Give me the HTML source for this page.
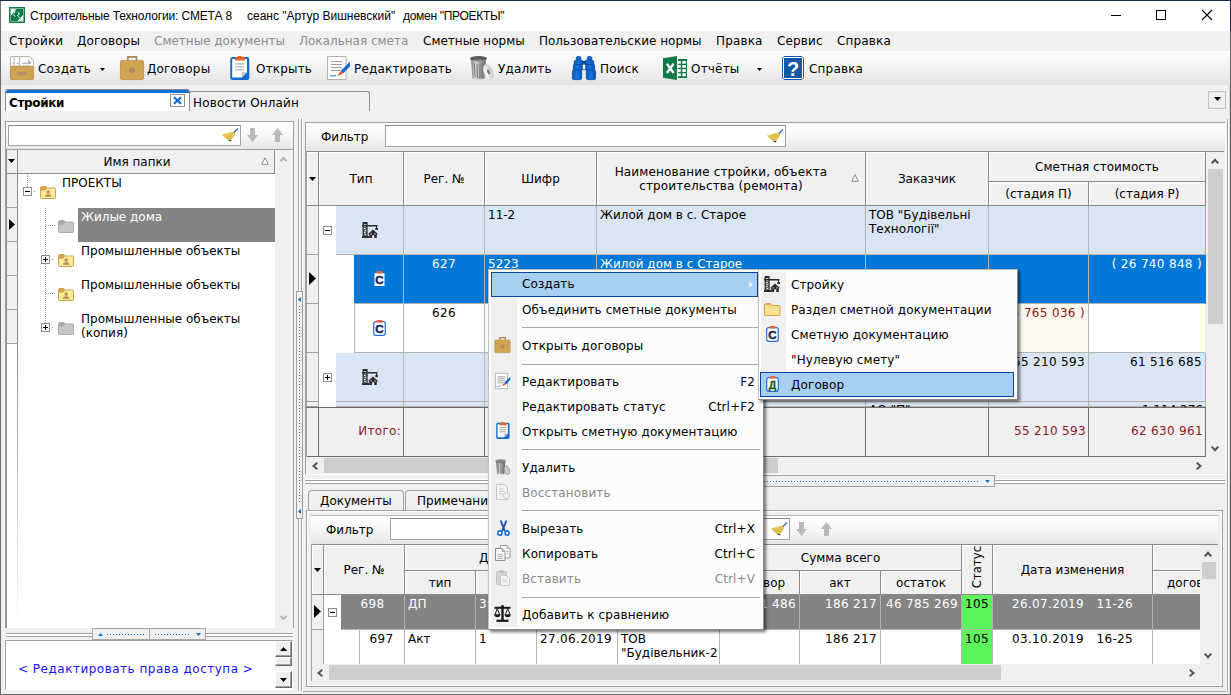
<!DOCTYPE html>
<html><head><meta charset="utf-8"><title>СМЕТА 8</title>
<style>
*{box-sizing:border-box;margin:0;padding:0}
html,body{width:1231px;height:695px;overflow:hidden}
body{position:relative;background:#f0f0f0;font-family:"DejaVu Sans","Liberation Sans",sans-serif;font-size:12px;color:#000;line-height:14px}
.a{position:absolute}
.t{position:absolute;white-space:nowrap}
.seg{font-family:"Liberation Sans",sans-serif}
.hl{position:absolute;height:1px;background:#a0a0a0}
.vl{position:absolute;width:1px;background:#a0a0a0}
svg{position:absolute;overflow:visible}
.hd{position:absolute;background:#f0f0f0;border-right:1px solid #8a8a8a;border-bottom:1px solid #8a8a8a;display:flex;align-items:center;justify-content:center;text-align:center;line-height:14px;box-shadow:inset 1px 1px 0 #fff}
.c{position:absolute;border-right:1px solid #b4b4b4;border-bottom:1px solid #b4b4b4;padding:2px 3px 0 3px;line-height:14px;overflow:hidden}
.r{text-align:right}
.ce{text-align:center}
.n{letter-spacing:.33px}
.mi{position:absolute;white-space:nowrap;line-height:14px;letter-spacing:.12px}
.sep{position:absolute;height:1px;background:#a0a0a0}
</style></head><body>
<!-- TITLEBAR -->
<div class="a" id="titlebar" style="left:0;top:0;width:1231px;height:31px;background:#fff"></div>
<div class="a" style="left:0;top:0;width:1231px;height:1px;background:#1b2a4a"></div>
<div class="a" style="left:1230px;top:0;width:1px;height:31px;background:#1b2a4a"></div>
<div class="a" style="left:0;top:1px;width:1px;height:694px;background:#6d6d6d"></div>
<div class="a" style="left:1230px;top:31px;width:1px;height:664px;background:#5f5f5f"></div><div class="a" style="left:1229px;top:31px;width:1px;height:663px;background:#d9d9d9"></div>
<!--ICONS_TITLE-->
<div class="t seg" style="left:30px;top:9px;font-size:12px;letter-spacing:-0.13px">Строительные Технологии: СМЕТА 8</div>
<div class="t seg" style="left:247px;top:9px;font-size:12px;">сеанс "Артур Вишневский"</div>
<div class="t seg" style="left:403px;top:9px;font-size:12px;letter-spacing:-0.3px">домен "ПРОЕКТЫ"</div>
<!-- MENUBAR -->
<div class="a" style="left:1px;top:31px;width:1229px;height:20px;background:#f0f0f0"></div>
<div class="t" style="left:9px;top:34px;letter-spacing:.15px">Стройки</div>
<div class="t" style="left:77px;top:34px;letter-spacing:.15px">Договоры</div>
<div class="t" style="left:154px;top:34px;color:#8c8c8c">Сметные документы</div>
<div class="t" style="left:299px;top:34px;color:#8c8c8c">Локальная смета</div>
<div class="t" style="left:423px;top:34px">Сметные нормы</div>
<div class="t" style="left:539px;top:34px">Пользовательские нормы</div>
<div class="t" style="left:716px;top:34px;letter-spacing:.15px">Правка</div>
<div class="t" style="left:777px;top:34px;letter-spacing:.15px">Сервис</div>
<div class="t" style="left:837px;top:34px;letter-spacing:.15px">Справка</div>
<!-- TOOLBAR -->
<div class="a" style="left:1px;top:51px;width:1229px;height:34px;background:linear-gradient(#fdfdfd,#f4f4f4 45%,#e3e3e3)"></div>
<div class="t" style="left:38px;top:62px;letter-spacing:.18px">Создать</div>
<div class="t" style="left:147px;top:62px;letter-spacing:.18px">Договоры</div>
<div class="t" style="left:256px;top:62px;letter-spacing:.18px">Открыть</div>
<div class="t" style="left:354px;top:62px;letter-spacing:.18px">Редактировать</div>
<div class="t" style="left:498px;top:62px;letter-spacing:.18px">Удалить</div>
<div class="t" style="left:600px;top:62px;letter-spacing:.18px">Поиск</div>
<div class="t" style="left:691px;top:62px;letter-spacing:.18px">Отчёты</div>
<div class="t" style="left:809px;top:62px;letter-spacing:.18px">Справка</div>
<svg style="left:9px;top:7px" width="16" height="16" viewBox="0 0 16 16"><rect x="0" y="0" width="16" height="16" fill="#0b7a43"/><rect x="1.500" y="1.500" width="13" height="13" fill="none" stroke="#fff" stroke-opacity=".55" stroke-width=".8"/><path d="M2 2h5.500L2 8.500z" fill="#fff"/><path d="M14 14H8.500L14 8z" fill="#fff"/><path d="M4.800 6.200l1.200-1M4.500 8l1.500 1.200M9 5.500l1.500 1.200M8.500 8.500l1.500-1.200M9.500 9.500l.8 1" stroke="#fff" stroke-width="1" stroke-linecap="round" fill="none"/></svg>
<!-- window buttons -->
<div class="a" style="left:1111px;top:15px;width:10px;height:1px;background:#000"></div>
<div class="a" style="left:1156px;top:10px;width:10px;height:10px;border:1px solid #000"></div>
<svg style="left:1202px;top:10px" width="10" height="10" viewBox="0 0 10 10"><path d="M0 0L10 10M10 0L0 10" stroke="#000" stroke-width="1.1"/></svg>
<!-- Создать -->
<svg style="left:10px;top:56px" width="24" height="24" viewBox="0 0 24 24">
<path d="M.5 11V2Q.5 .5 2 .5H19.500L23.500 4.500V11z" fill="#fff" stroke="#b3a99b" stroke-width=".9"/><path d="M4.200 .5V11M9.600 .5V11" stroke="#b3a99b" stroke-width=".9"/>
<path d="M18 3.600V7.300H21.600z" fill="#a9a9a9"/>
<path d="M2.700 7.200h1.200M6.500 7.200h2.200M12 7.200h8.600" stroke="#a6a6a6" stroke-width="1"/><path d="M2.700 9.600h1.200M6.500 9.600h2.200M12 9.600h8.600" stroke="#c3cad6" stroke-width=".8"/>
<rect x=".4" y="10.400" width="23.200" height="13.200" rx="1.600" fill="#d0a352" stroke="#b98948" stroke-width=".8"/><rect x="7" y="16" width="9.600" height="2.800" fill="#b08e66"/></svg>
<svg style="left:100px;top:68px" width="5" height="3" viewBox="0 0 5 3"><path d="M0 0h5L2.500 3z" fill="#000"/></svg>
<!-- Договоры -->
<svg style="left:120px;top:56px" width="24" height="24" viewBox="0 0 24 24">
<path d="M7.900 4.500V.9h8.500V4.500" fill="none" stroke="#a8854f" stroke-width="1.700"/><rect x=".4" y="4.400" width="23.200" height="19.200" rx="1.600" fill="#d1a552" stroke="#b38c4e" stroke-width=".8"/><path d="M.8 6.500Q5 14 12 15.500Q19 14 23.200 6.500" fill="none" stroke="#b9935a" stroke-width="1" stroke-dasharray="1.500 .8"/><circle cx="12" cy="14.300" r="3" fill="#b08e66"/></svg>
<!-- Открыть -->
<svg style="left:230px;top:56px" width="20" height="24" viewBox="0 0 20 24"><rect x=".3" y="1" width="19" height="23" rx="2.200" fill="#0f6bd2"/><path d="M2.200 3h14.800v13.300l-5.200 5.200H2.200z" fill="#fff"/><path d="M17 16.300h-5.200v5.200z" fill="#bdbdbd"/><path d="M5 4.600V2.200Q5 1.300 6 1.300H7.200L8 0h3.800l.8 1.300H14Q15 1.300 15 2.200V4.600z" fill="#e8622c"/><path d="M5 7.900h9M5 10.900h9M5 13.900h9" stroke="#959595" stroke-width=".95"/></svg>
<!-- Редактировать -->
<svg style="left:327px;top:56px" width="24" height="24" viewBox="0 0 24 24"><rect x=".5" y=".5" width="18.500" height="23" fill="#fff" stroke="#b6b2ae" stroke-width="1"/><path d="M4 5.600h11M4 8.600h11M4 11.600h11M4 14.600h9" stroke="#8f8f8f" stroke-width=".95"/><path d="M3 20.500l1-1.200 1 1.200 1-1.200 1 1.200 1-1.200 1 .6" fill="none" stroke="#1a6fd8" stroke-width="1"/><path d="M22.800 5.800l.2 4.500-6.700 6.900-2.500-2.400z" fill="#0f6bd2"/><path d="M13.800 14.800l2.500 2.400L10.200 20.200z" fill="#e8541e"/></svg>
<!-- Удалить -->
<svg style="left:470px;top:56px" width="24" height="24" viewBox="0 0 24 24">
<defs><linearGradient id="tg" x1="0" x2="1"><stop offset="0" stop-color="#7a7a7a"/><stop offset=".3" stop-color="#dedede"/><stop offset=".65" stop-color="#a2a2a2"/><stop offset="1" stop-color="#666"/></linearGradient>
<linearGradient id="tl" x1="0" x2="1"><stop offset="0" stop-color="#fff"/><stop offset="1" stop-color="#c4c4c4"/></linearGradient></defs>
<path d="M1 3h15l-1.400 19.500q-6 2-12.200 0z" fill="url(#tg)"/>
<path d="M4.300 7l.9 14M7 7.500l.4 14.500M10 7.500l-.2 14.500M12.800 7l-.8 14" stroke="#6a6a6a" stroke-width="1.100" opacity=".8"/>
<ellipse cx="8.500" cy="2.400" rx="8.500" ry="2.300" fill="#5a5a5a"/><ellipse cx="8.500" cy="4.600" rx="7.300" ry="1.300" fill="#8e8e8e" opacity=".7"/>
<ellipse cx="18.300" cy="16" rx="4.300" ry="8" transform="rotate(-22 18.300 16)" fill="url(#tl)" stroke="#d0d0d0" stroke-width=".6"/>
<ellipse cx="18.600" cy="16" rx="1.300" ry="2.600" transform="rotate(-22 18.600 16)" fill="#7c7c7c"/></svg>
<!-- Поиск -->
<svg style="left:572px;top:56px" width="24" height="24" viewBox="0 0 24 24">
<defs><linearGradient id="bg1" x1="0" x2="1"><stop offset="0" stop-color="#0a57bb"/><stop offset=".45" stop-color="#1873de"/><stop offset="1" stop-color="#0a52b0"/></linearGradient></defs>
<g fill="url(#bg1)" stroke="#084a9c" stroke-width=".8">
<rect x="4.300" y=".4" width="4.600" height="5" rx="1.600"/><rect x="15.200" y=".4" width="4.600" height="5" rx="1.600"/>
<rect x="2.300" y="4.500" width="8.700" height="4.300" rx="1"/><rect x="13" y="4.500" width="8.700" height="4.300" rx="1"/>
<rect x="1.300" y="8.500" width="8.900" height="5.700" rx=".8"/><rect x="13.800" y="8.500" width="8.900" height="5.700" rx=".8"/>
<rect x=".4" y="14" width="9.300" height="9.600" rx="1.600"/><rect x="14.300" y="14" width="9.300" height="9.600" rx="1.600"/>
</g>
<rect x="10.500" y="5" width="3" height="3.500" fill="#084a9c"/><rect x="10" y="13.300" width="4" height=".9" fill="#0a57bb"/></svg>
<!-- Отчёты -->
<svg style="left:663px;top:56px" width="24" height="24" viewBox="0 0 24 24">
<rect x="14.600" y="3" width="9.400" height="19" fill="#0e7a44"/>
<g fill="#fff"><rect x="15" y="5" width="2.800" height="2.700"/><rect x="19.300" y="5" width="3.600" height="2.700"/><rect x="15" y="9.100" width="2.800" height="2.700"/><rect x="19.300" y="9.100" width="3.600" height="2.700"/><rect x="15" y="13.200" width="2.800" height="2.700"/><rect x="19.300" y="13.200" width="3.600" height="2.700"/><rect x="15" y="17.300" width="2.800" height="2.900"/><rect x="19.300" y="17.300" width="3.600" height="2.900"/></g>
<path d="M0 2.200L14 0V24L0 21.800z" fill="#0e7a44"/><rect x="14" y="0" width=".9" height="24" fill="#fff"/>
<path d="M3.800 7.800L10.600 17M10.600 7.800L3.800 17" stroke="#fff" stroke-width="2.300"/></svg>
<svg style="left:757px;top:68px" width="5" height="3" viewBox="0 0 5 3"><path d="M0 0h5L2.500 3z" fill="#000"/></svg>
<!-- Справка -->
<svg style="left:782px;top:56px" width="22" height="24" viewBox="0 0 22 24">
<path d="M2.200 .5H19.800L21.500 2.200V21.800L19.800 23.500H2.200L.5 21.800V2.200z" fill="#fff" stroke="#0f57a8" stroke-width="1"/><rect x="2" y="2" width="18" height="20" fill="#0f57a8"/>
<text x="11" y="19.500" text-anchor="middle" font-family="Liberation Sans,sans-serif" font-weight="bold" font-size="20" fill="#fff">?</text></svg>
<!-- TABS -->
<div class="a" style="left:5px;top:89px;width:185px;height:22px;background:#fff;border:1px solid #8c8c8c;border-bottom:none;border-radius:3px 3px 0 0"></div>
<div class="a" style="left:6px;top:90px;width:183px;height:3px;background:#0a6fd6;border-radius:2px 2px 0 0"></div>
<div class="t" style="left:9px;top:96px;font-weight:bold;letter-spacing:-0.35px">Стройки</div>
<div class="a" style="left:170px;top:94px;width:15px;height:13px;border:1px solid #8f8f8f;background:#fff"></div>
<svg style="left:173px;top:97px" width="9" height="7" viewBox="0 0 9 7"><path d="M1 0.300L8 6.700M8 0.300L1 6.700" stroke="#0a6ad6" stroke-width="2.200"/></svg>
<div class="a" style="left:189px;top:91px;width:181px;height:20px;border:1px solid #8c8c8c;border-bottom:none;border-radius:3px 3px 0 0;background:#f0f0f0"></div>
<div class="t" style="left:193px;top:96px;letter-spacing:0.15px">Новости Онлайн</div>
<div class="a" style="left:1208px;top:91px;width:18px;height:18px;border:1px solid #c2c2c2;background:#f0f0f0"></div>
<svg style="left:1214px;top:97px" width="7" height="4" viewBox="0 0 7 4"><path d="M0 0h7L3.500 4z" fill="#000"/></svg>
<!-- LEFT -->
<!-- left panel frame -->
<div class="a" style="left:5px;top:121px;width:289px;height:507px;border:1px solid #a0a0a0;border-bottom:none;background:#fff"></div>
<div class="a" style="left:6px;top:122px;width:287px;height:27px;background:linear-gradient(#fff,#f6f6f6 50%,#e6e6e6)"></div>
<div class="a" style="left:8px;top:125px;width:233px;height:21px;border:1px solid #a3a3a3;border-top-color:#8e8e8e;background:#fff"></div>
<!-- broom -->
<svg style="left:222px;top:128px" width="17" height="14" viewBox="0 0 17 14"><path d="M16 0.500L11.500 5" stroke="#3d62b8" stroke-width="1.300"/><path d="M10 3.500l3 2.500-1.500 3z" fill="#c9a33a"/><path d="M0 6.500L10.500 3.500 13 6 8.500 13.500C5 12 2 9.500 0 6.500z" fill="#e8c95a"/><path d="M3 7.500l5 4M5.500 6.500l4.500 4M8 5.500l3 3" stroke="#c9a33a" stroke-width=".7"/><path d="M6 12l2.500 1.500 1-1.500z" fill="#3a3a3a"/></svg>
<svg style="left:247px;top:128px" width="11" height="14" viewBox="0 0 11 14"><path d="M3 0h5v7h3L5.500 14 0 7h3z" fill="#b9b9b9"/></svg>
<svg style="left:272px;top:128px" width="11" height="14" viewBox="0 0 11 14"><path d="M3 14h5V7h3L5.500 0 0 7h3z" fill="#b9b9b9"/></svg>
<!-- header -->
<div class="hl" style="left:6px;top:149px;width:287px"></div>
<div class="a" style="left:6px;top:150px;width:269px;height:24px;background:#f0f0f0;border-bottom:1px solid #8c8c8c"></div>
<div class="vl" style="left:17px;top:150px;height:194px;background:#8c8c8c"></div><div class="vl" style="left:17px;top:344px;height:284px;background:linear-gradient(#8c8c8c,#fff)"></div>
<div class="vl" style="left:274px;top:150px;height:24px;background:#8c8c8c"></div>
<svg style="left:8px;top:159px" width="7" height="4" viewBox="0 0 7 4"><path d="M0 0h7L3.500 4z" fill="#000"/></svg>
<div class="t" style="left:18px;top:155px;width:256px;text-align:center;padding-right:18px">Имя папки</div>
<svg style="left:261px;top:157px" width="8" height="8" viewBox="0 0 8 8"><path d="M4 0.800L7.300 7.300H.7z" fill="#fff" stroke="#7a7a7a" stroke-width=".9"/></svg>
<!-- scrollbar col -->
<div class="a" style="left:275px;top:150px;width:18px;height:478px;background:#f0f0f0"></div>
<svg style="left:280px;top:156px" width="7" height="6" viewBox="0 0 7 6"><path d="M0.500 5L3.500 2 6.500 5" fill="none" stroke="#b4b4b4" stroke-width="2"/></svg>
<svg style="left:280px;top:615px" width="7" height="6" viewBox="0 0 7 6"><path d="M0.500 1L3.500 4 6.500 1" fill="none" stroke="#b4b4b4" stroke-width="2"/></svg>
<!-- indicator column -->
<div class="a" style="left:6px;top:174px;width:11px;height:170px;background:#f0f0f0"></div><div class="vl" style="left:6px;top:149px;height:479px;background:#8c8c8c"></div>
<div class="hl" style="left:6px;top:207px;width:12px"></div><div class="hl" style="left:6px;top:241px;width:12px"></div><div class="hl" style="left:6px;top:275px;width:12px"></div><div class="hl" style="left:6px;top:309px;width:12px"></div><div class="hl" style="left:6px;top:343px;width:12px"></div>
<svg style="left:9px;top:219px" width="6" height="11" viewBox="0 0 6 11"><path d="M0 0l6 5.500-6 5.500z" fill="#000"/></svg>
<!-- tree -->
<div class="a" style="left:78px;top:208px;width:197px;height:34px;background:#848484"></div>
<div class="a" style="left:27px;top:174px;width:0;height:13px;border-left:1px dotted #9a9a9a"></div>
<div class="a" style="left:45px;top:208px;width:0;height:119px;border-left:1px dotted #9a9a9a"></div>
<div class="a" style="left:34px;top:191px;width:1px;height:1px;background:#9a9a9a"></div>
<div class="a" style="left:46px;top:225px;width:9px;height:0;border-top:1px dotted #9a9a9a"></div>
<div class="a" style="left:52px;top:259px;width:1px;height:1px;background:#9a9a9a"></div>
<div class="a" style="left:46px;top:293px;width:9px;height:0;border-top:1px dotted #9a9a9a"></div>
<div class="a" style="left:52px;top:327px;width:1px;height:1px;background:#9a9a9a"></div>
<svg style="left:23px;top:187px" width="9" height="9" viewBox="0 0 9 9"><rect x=".5" y=".5" width="8" height="8" fill="#fff" stroke="#8c8c8c"/><path d="M2 4.500h5" stroke="#000"/></svg>
<svg style="left:41px;top:255px" width="9" height="9" viewBox="0 0 9 9"><rect x=".5" y=".5" width="8" height="8" fill="#fff" stroke="#8c8c8c"/><path d="M2 4.500h5M4.500 2v5" stroke="#000"/></svg>
<svg style="left:41px;top:323px" width="9" height="9" viewBox="0 0 9 9"><rect x=".5" y=".5" width="8" height="8" fill="#fff" stroke="#8c8c8c"/><path d="M2 4.500h5M4.500 2v5" stroke="#000"/></svg>
<svg width="0" height="0"><defs>
<g id="fuser"><path d="M.5 2Q.5 .5 2 .5h4l1.500 1.500h7q1 0 1 1V11.500q0 1-1 1H1.500q-1 0-1-1z" fill="#faec98" stroke="#cfa050" stroke-width="1"/><path d="M1 1h5l1.500 1.200-2.700 2.600H1z" fill="#dba54f"/><circle cx="8.200" cy="6" r="1.700" fill="#b58d5a"/><path d="M4.800 10.800q0-2.600 3.400-2.600t3.400 2.600z" fill="#b58d5a"/></g>
<g id="fgray"><path d="M.5 2Q.5 .5 2 .5h4l1.500 1.500h7q1 0 1 1V11.500q0 1-1 1H1.500q-1 0-1-1z" fill="#c6c6c6" stroke="#ababab" stroke-width="1"/><path d="M1 1h5l1.500 1.200-2.700 2.600H1z" fill="#a9a9a9"/></g>
</defs></svg>
<svg style="left:40px;top:186px" width="16" height="14"><use href="#fuser"/></svg>
<svg style="left:58px;top:220px" width="16" height="14"><use href="#fgray"/></svg>
<svg style="left:58px;top:254px" width="16" height="14"><use href="#fuser"/></svg>
<svg style="left:58px;top:288px" width="16" height="14"><use href="#fuser"/></svg>
<svg style="left:58px;top:322px" width="16" height="14"><use href="#fgray"/></svg>
<div class="t" style="left:62px;top:176px">ПРОЕКТЫ</div>
<div class="t" style="left:81px;top:210px;color:#fff">Жилые дома</div>
<div class="t" style="left:81px;top:244px">Промышленные объекты</div>
<div class="t" style="left:81px;top:278px">Промышленные объекты</div>
<div class="t" style="left:81px;top:312px">Промышленные объекты</div>
<div class="t" style="left:81px;top:326px">(копия)</div>
<!-- horizontal splitter -->
<div class="hl" style="left:6px;top:633px;width:287px;background:#a0a0a0"></div><div class="hl" style="left:6px;top:634px;width:287px;height:2px;background:#fff"></div>
<div class="hl" style="left:6px;top:636px;width:287px;background:#a0a0a0"></div>
<div class="a" style="left:92px;top:628px;width:58px;height:12px;background:#efefef;border:1px solid #a8a8a8"></div>
<div class="a" style="left:149px;top:628px;width:57px;height:12px;background:#efefef;border:1px solid #a8a8a8"></div>
<svg style="left:98px;top:633px" width="5" height="3" viewBox="0 0 5 3"><path d="M0 3h5L2.500 0z" fill="#1a6fd0"/></svg>
<div class="a" style="left:107px;top:634px;width:38px;height:1px;background:repeating-linear-gradient(90deg,#1a6fd0 0 1px,transparent 1px 3px)"></div>
<div class="a" style="left:155px;top:634px;width:35px;height:1px;background:repeating-linear-gradient(90deg,#1a6fd0 0 1px,transparent 1px 3px)"></div>
<svg style="left:196px;top:633px" width="5" height="3" viewBox="0 0 5 3"><path d="M0 0h5L2.500 3z" fill="#1a6fd0"/></svg>
<!-- bottom box -->
<div class="a" style="left:5px;top:640px;width:288px;height:50px;border:1px solid #a0a0a0;border-right-color:#fff;border-bottom-color:#fff;background:#fff"></div>
<div class="a" style="left:275px;top:641px;width:17px;height:47px;background:#f4f4f4"></div>
<div class="a" style="left:275px;top:641px;width:17px;height:16px;background:#f0f0f0;border:1px solid #fff;border-right-color:#696969;border-bottom-color:#696969;box-shadow:inset -1px -1px 0 #a0a0a0"></div>
<div class="a" style="left:275px;top:657px;width:17px;height:9px;background:#f0f0f0;border:1px solid #fff;border-right-color:#696969;border-bottom-color:#696969;box-shadow:inset -1px -1px 0 #a0a0a0"></div>
<div class="a" style="left:275px;top:671px;width:17px;height:17px;background:#f0f0f0;border:1px solid #fff;border-right-color:#696969;border-bottom-color:#696969;box-shadow:inset -1px -1px 0 #a0a0a0"></div>
<svg style="left:280px;top:647px" width="7" height="4" viewBox="0 0 7 4"><path d="M0 4h7L3.500 0z" fill="#000"/></svg>
<svg style="left:280px;top:678px" width="7" height="4" viewBox="0 0 7 4"><path d="M0 0h7L3.500 4z" fill="#000"/></svg>
<div class="t" style="left:18px;top:662px;color:#1414ff;letter-spacing:.5px">&lt; Редактировать права доступа &gt;</div>
<!-- vertical splitter -->
<div class="vl" style="left:298px;top:119px;height:572px;background:#a8a8a8"></div><div class="vl" style="left:299px;top:119px;height:572px;background:#fff"></div>
<div class="vl" style="left:301px;top:119px;height:572px;background:#a8a8a8"></div><div class="vl" style="left:302px;top:119px;height:572px;background:#fff"></div>
<!-- RTOP -->
<div class="a" style="left:305px;top:122px;width:921px;height:353px;border:1px solid #a0a0a0;border-right-color:#fff;border-bottom-color:#fff;background:#f0f0f0"></div>
<div class="a" style="left:306px;top:123px;width:919px;height:28px;background:linear-gradient(#fff,#f6f6f6 50%,#e6e6e6)"></div>
<div class="t" style="left:321px;top:130px">Фильтр</div>
<div class="a" style="left:385px;top:125px;width:401px;height:22px;border:1px solid #a3a3a3;border-top-color:#8e8e8e;background:#fff"></div>
<svg style="left:767px;top:129px" width="17" height="14" viewBox="0 0 17 14"><path d="M16 0.500L11.500 5" stroke="#3d62b8" stroke-width="1.300"/><path d="M10 3.500l3 2.500-1.500 3z" fill="#c9a33a"/><path d="M0 6.500L10.500 3.500 13 6 8.500 13.500C5 12 2 9.500 0 6.500z" fill="#e8c95a"/><path d="M3 7.500l5 4M5.500 6.500l4.500 4M8 5.500l3 3" stroke="#c9a33a" stroke-width=".7"/><path d="M6 12l2.500 1.500 1-1.500z" fill="#3a3a3a"/></svg>
<div class="hl" style="left:306px;top:151px;width:918px;background:#8c8c8c"></div>
<div class="vl" style="left:306px;top:152px;height:305px;background:#a0a0a0"></div>
<div class="hd" style="left:307px;top:152px;width:12px;height:54px;"></div>
<svg style="left:309px;top:177px" width="7" height="4" viewBox="0 0 7 4"><path d="M0 0h7L3.500 4z" fill="#000"/></svg>
<div class="hd" style="left:319px;top:152px;width:85px;height:54px;">Тип</div>
<div class="hd" style="left:404px;top:152px;width:81px;height:54px;">Рег. №</div>
<div class="hd" style="left:485px;top:152px;width:112px;height:54px;">Шифр</div>
<div class="hd" style="left:597px;top:152px;width:269px;height:54px;padding-right:20px;letter-spacing:0.15px">Наименование стройки, объекта<br>строительства (ремонта)</div>
<svg style="left:851px;top:174px" width="8" height="8" viewBox="0 0 8 8"><path d="M4 0.800L7.300 7.300H.7z" fill="#fff" stroke="#7a7a7a" stroke-width=".9"/></svg>
<div class="hd" style="left:866px;top:152px;width:123px;height:54px;">Заказчик</div>
<div class="hd" style="left:989px;top:152px;width:217px;height:30px;">Сметная стоимость</div>
<div class="hd" style="left:989px;top:182px;width:100px;height:24px;">(стадия П)</div>
<div class="hd" style="left:1089px;top:182px;width:117px;height:24px;">(стадия Р)</div>
<div class="a" style="left:319px;top:206px;width:887px;height:201px;background:#fff"></div>
<div class="a" style="left:307px;top:206px;width:12px;height:49px;background:#f0f0f0;border-right:1px solid #a0a0a0;border-bottom:1px solid #a0a0a0"></div>
<div class="a" style="left:307px;top:255px;width:12px;height:49px;background:#f0f0f0;border-right:1px solid #a0a0a0;border-bottom:1px solid #a0a0a0"></div>
<div class="a" style="left:307px;top:304px;width:12px;height:49px;background:#f0f0f0;border-right:1px solid #a0a0a0;border-bottom:1px solid #a0a0a0"></div>
<div class="a" style="left:307px;top:353px;width:12px;height:49px;background:#f0f0f0;border-right:1px solid #a0a0a0;border-bottom:1px solid #a0a0a0"></div>
<div class="a" style="left:307px;top:402px;width:12px;height:5px;background:#f0f0f0;border-right:1px solid #a0a0a0;border-bottom:1px solid #a0a0a0"></div>
<svg style="left:309px;top:272px" width="7" height="13" viewBox="0 0 7 13"><path d="M0 0l7 6.500-7 6.500z" fill="#000"/></svg>
<div class="c " style="left:336px;top:206px;width:68px;height:49px;background:#d9e5f3;color:#000"></div>
<div class="c " style="left:404px;top:206px;width:81px;height:49px;background:#d9e5f3;color:#000"></div>
<div class="c " style="left:485px;top:206px;width:112px;height:49px;background:#d9e5f3;color:#000">11-2</div>
<div class="c " style="left:597px;top:206px;width:269px;height:49px;background:#d9e5f3;color:#000">Жилой дом в с. Старое</div>
<div class="c " style="left:866px;top:206px;width:123px;height:49px;background:#d9e5f3;color:#000">ТОВ "Будівельні Технології"</div>
<div class="c " style="left:989px;top:206px;width:100px;height:49px;background:#d9e5f3;color:#000"></div>
<div class="c " style="left:1089px;top:206px;width:117px;height:49px;background:#d9e5f3;color:#000"></div>
<div class="vl" style="left:1205px;top:206px;height:49px;background:#62e062"></div>
<div class="c " style="left:354px;top:255px;width:50px;height:49px;background:#0078d7;color:#fff"></div>
<div class="c ce n" style="left:404px;top:255px;width:81px;height:49px;background:#0078d7;color:#fff">627</div>
<div class="c " style="left:485px;top:255px;width:112px;height:49px;background:#0078d7;color:#fff">5223</div>
<div class="c " style="left:597px;top:255px;width:269px;height:49px;background:#0078d7;color:#fff">Жилой дом в с Старое</div>
<div class="c " style="left:866px;top:255px;width:123px;height:49px;background:#0078d7;color:#fff"></div>
<div class="c " style="left:989px;top:255px;width:100px;height:49px;background:#0078d7;color:#fff"></div>
<div class="c r n" style="left:1089px;top:255px;width:117px;height:49px;background:#0078d7;color:#fff">( 26 740 848 )</div>
<div class="vl" style="left:1205px;top:255px;height:49px;background:#0078d7"></div>
<div class="c " style="left:354px;top:304px;width:50px;height:49px;background:#fff;color:#000"></div>
<div class="c ce n" style="left:404px;top:304px;width:81px;height:49px;background:#fff;color:#000">626</div>
<div class="c " style="left:485px;top:304px;width:112px;height:49px;background:#fff;color:#000"></div>
<div class="c " style="left:597px;top:304px;width:269px;height:49px;background:#fff;color:#000"></div>
<div class="c " style="left:866px;top:304px;width:123px;height:49px;background:#fff;color:#000"></div>
<div class="c r" style="left:989px;top:304px;width:100px;height:49px;background:#fff;color:#000"></div>
<div class="c " style="left:1089px;top:304px;width:117px;height:49px;background:#fff;color:#000"></div>
<div class="vl" style="left:1205px;top:304px;height:49px;background:#f3f0a0"></div>
<div class="c " style="left:336px;top:353px;width:68px;height:49px;background:#d9e5f3;color:#000"></div>
<div class="c " style="left:404px;top:353px;width:81px;height:49px;background:#d9e5f3;color:#000"></div>
<div class="c " style="left:485px;top:353px;width:112px;height:49px;background:#d9e5f3;color:#000"></div>
<div class="c " style="left:597px;top:353px;width:269px;height:49px;background:#d9e5f3;color:#000"></div>
<div class="c " style="left:866px;top:353px;width:123px;height:49px;background:#d9e5f3;color:#000"></div>
<div class="c r n" style="left:989px;top:353px;width:100px;height:49px;background:#d9e5f3;color:#000">55 210 593</div>
<div class="c r n" style="left:1089px;top:353px;width:117px;height:49px;background:#d9e5f3;color:#000">61 516 685</div>
<div class="vl" style="left:1205px;top:353px;height:49px;background:#62e062"></div>
<div class="c " style="left:336px;top:402px;width:68px;height:5px;background:#d9e5f3;color:#000"></div>
<div class="c " style="left:404px;top:402px;width:81px;height:5px;background:#d9e5f3;color:#000"></div>
<div class="c " style="left:485px;top:402px;width:112px;height:5px;background:#d9e5f3;color:#000"></div>
<div class="c " style="left:597px;top:402px;width:269px;height:5px;background:#d9e5f3;color:#000"></div>
<div class="c " style="left:866px;top:402px;width:123px;height:5px;background:#d9e5f3;color:#000"></div>
<div class="c " style="left:989px;top:402px;width:100px;height:5px;background:#d9e5f3;color:#000"></div>
<div class="c " style="left:1089px;top:402px;width:117px;height:5px;background:#d9e5f3;color:#000"></div>
<div class="c r n" style="left:989px;top:304px;width:100px;height:49px;background:#fdf9ee;color:#8b1a1a">( 5 765 036 )</div>
<div class="vl" style="left:354px;top:304px;height:49px;background:#b4b4b4"></div>
<div class="a" style="left:866px;top:402px;width:120px;height:5px;overflow:hidden"><div class="t" style="left:3px;top:1px">АО "П"</div></div>
<div class="a" style="left:1089px;top:402px;width:114px;height:5px;overflow:hidden"><div class="t r" style="right:0px;top:1px">1 114 276</div></div>
<svg style="left:323px;top:226px" width="9" height="9" viewBox="0 0 9 9"><rect x=".5" y=".5" width="8" height="8" fill="#fff" stroke="#8c8c8c"/><path d="M2 4.500h5" stroke="#000"/></svg>
<svg style="left:323px;top:373px" width="9" height="9" viewBox="0 0 9 9"><rect x=".5" y=".5" width="8" height="8" fill="#fff" stroke="#8c8c8c"/><path d="M2 4.500h5M4.500 2v5" stroke="#000"/></svg>
<svg width="0" height="0"><defs>
<g id="crane"><path d="M1.200 2v13M5 2v13" fill="none" stroke="#2b2b2b" stroke-width="1.300"/><path d="M1.200 4.500l3.800 2-3.800 2 3.800 2-3.800 2 3.800 2" fill="none" stroke="#2b2b2b" stroke-width=".9"/><rect x=".6" y="0" width="5" height="2.200" fill="#2b2b2b"/><rect x="0" y="3" width="15.500" height="1.500" fill="#2b2b2b"/><path d="M14.500 4v3" stroke="#2b2b2b" stroke-width="1"/><rect x="13.300" y="6" width="2.700" height="2" fill="#2b2b2b"/><rect x="0" y="14" width="7" height="2" fill="#2b2b2b"/><path d="M11 7.500l5.200 4.700h-1.400V16H7.200v-3.800H5.800z" fill="#2b2b2b"/><rect x="10.200" y="13.300" width="2" height="2.700" fill="#fff"/><rect x="8.500" y="11.300" width="1.200" height="1.200" fill="#d9e5f3"/><rect x="12.300" y="11.300" width="1.200" height="1.200" fill="#d9e5f3"/></g>
<g id="docC"><rect x=".7" y="1.700" width="11.600" height="13.600" rx="2" fill="#fff" stroke="#1f6fd0" stroke-width="1.200"/><rect x="3.500" y="0" width="6" height="2.400" rx="1" fill="#e8613a"/><text x="6.500" y="13" text-anchor="middle" font-family="Liberation Sans,sans-serif" font-weight="bold" font-size="11.500" fill="#14245c" stroke="#14245c" stroke-width=".45">С</text></g>
<g id="docCsel"><rect x="1.500" y="2.200" width="10" height="12.800" fill="#fff"/><rect x="3.500" y="0" width="6" height="2.400" rx="1" fill="#e8613a"/><text x="6.500" y="13" text-anchor="middle" font-family="Liberation Sans,sans-serif" font-weight="bold" font-size="11.500" fill="#14245c" stroke="#14245c" stroke-width=".45">С</text></g>
<g id="docD"><rect x=".7" y="1.700" width="11.600" height="13.600" rx="2" fill="#fff" stroke="#1f6fd0" stroke-width="1.200"/><rect x="3.500" y="0" width="6" height="2.400" rx="1" fill="#e8613a"/><text x="6.500" y="12.500" text-anchor="middle" font-family="Liberation Sans,sans-serif" font-weight="bold" font-size="10.500" fill="#1a5e2a" stroke="#1a5e2a" stroke-width=".4">Д</text></g>
</defs></svg>
<svg style="left:362px;top:222px" width="17" height="17"><use href="#crane"/></svg>
<svg style="left:362px;top:369px" width="17" height="17"><use href="#crane"/></svg>
<svg style="left:373px;top:271px" width="14" height="17"><use href="#docCsel"/></svg>
<svg style="left:373px;top:320px" width="14" height="17"><use href="#docC"/></svg>
<div class="hl" style="left:306px;top:407px;width:900px;background:#6e6e6e"></div>
<div class="a" style="left:307px;top:408px;width:12px;height:49px;background:#f0f0f0;border-right:1px solid #6e6e6e;border-bottom:1px solid #6e6e6e;"></div>
<div class="a" style="left:319px;top:408px;width:85px;height:49px;background:#f0f0f0;border-right:1px solid #6e6e6e;border-bottom:1px solid #6e6e6e;"><div class="t" style="right:2px;top:16px;color:#8b1a1a;letter-spacing:.3px">Итого:</div></div>
<div class="a" style="left:404px;top:408px;width:81px;height:49px;background:#f0f0f0;border-right:1px solid #6e6e6e;border-bottom:1px solid #6e6e6e;"></div>
<div class="a" style="left:485px;top:408px;width:112px;height:49px;background:#f0f0f0;border-right:1px solid #6e6e6e;border-bottom:1px solid #6e6e6e;"></div>
<div class="a" style="left:597px;top:408px;width:269px;height:49px;background:#f0f0f0;border-right:1px solid #6e6e6e;border-bottom:1px solid #6e6e6e;"></div>
<div class="a" style="left:866px;top:408px;width:123px;height:49px;background:#f0f0f0;border-right:1px solid #6e6e6e;border-bottom:1px solid #6e6e6e;"></div>
<div class="a" style="left:989px;top:408px;width:100px;height:49px;background:#f0f0f0;border-right:1px solid #6e6e6e;border-bottom:1px solid #6e6e6e;"><div class="t" style="right:2px;top:16px;color:#8b1a1a;letter-spacing:.33px">55 210 593</div></div>
<div class="a" style="left:1089px;top:408px;width:117px;height:49px;background:#f0f0f0;border-right:1px solid #6e6e6e;border-bottom:1px solid #6e6e6e;"><div class="t" style="right:2px;top:16px;color:#8b1a1a;letter-spacing:.33px">62 630 961</div></div>
<div class="a" style="left:1207px;top:152px;width:17px;height:305px;background:#f0f0f0"></div>
<div class="a" style="left:1208px;top:169px;width:15px;height:155px;background:#cdcdcd"></div>
<svg style="left:1211px;top:158px" width="8" height="6" viewBox="0 0 8 6"><path d="M0.700 5.400L4 1.900 7.300 5.400" fill="none" stroke="#505050" stroke-width="2.100"/></svg>
<svg style="left:1211px;top:446px" width="8" height="6" viewBox="0 0 8 6"><path d="M0.700 0.600L4 4.100 7.300 0.600" fill="none" stroke="#505050" stroke-width="2.100"/></svg>
<div class="a" style="left:306px;top:457px;width:901px;height:17px;background:#f0f0f0"></div>
<div class="a" style="left:324px;top:458px;width:454px;height:15px;background:#cdcdcd"></div>
<svg style="left:312px;top:462px" width="6" height="8" viewBox="0 0 6 8"><path d="M5.300 0.700L1.500 4 5.300 7.300" fill="none" stroke="#555" stroke-width="2"/></svg>
<svg style="left:1196px;top:462px" width="6" height="8" viewBox="0 0 6 8"><path d="M0.700 0.700L4.500 4 0.700 7.300" fill="none" stroke="#555" stroke-width="2"/></svg>
<div class="hl" style="left:305px;top:479px;width:920px;background:#fff"></div><div class="hl" style="left:305px;top:480px;width:920px;background:#a0a0a0"></div><div class="hl" style="left:305px;top:481px;width:920px;height:2px;background:#fff"></div>
<div class="hl" style="left:305px;top:483px;width:920px;background:#a0a0a0"></div>
<div class="a" style="left:535px;top:475px;width:460px;height:12px;background:#efefef;border:1px solid #a0a0a0"></div>
<div class="a" style="left:542px;top:481px;width:436px;height:1px;background:repeating-linear-gradient(90deg,#1a6fd0 0 1px,transparent 1px 3px)"></div>
<svg style="left:985px;top:480px" width="5" height="3" viewBox="0 0 5 3"><path d="M0 0h5L2.500 3z" fill="#1a6fd0"/></svg>
<div class="a" style="left:296px;top:291px;width:7px;height:228px;background:#f0f0f0;border:1px solid #a0a0a0"></div>
<div class="a" style="left:299px;top:306px;width:1px;height:196px;background:repeating-linear-gradient(180deg,#1a6fd0 0 1px,transparent 1px 3px)"></div>
<svg style="left:298px;top:297px" width="3" height="5" viewBox="0 0 3 5"><path d="M3 0v5L0 2.500z" fill="#1a6fd0"/></svg>
<svg style="left:298px;top:509px" width="3" height="5" viewBox="0 0 3 5"><path d="M3 0v5L0 2.500z" fill="#1a6fd0"/></svg><!-- RBOT -->
<div class="a" style="left:405px;top:490px;width:110px;height:20px;border:1px solid #a0a0a0;border-bottom:none;border-radius:4px 4px 0 0;background:#f0f0f0"></div>
<div class="t" style="left:417px;top:494px">Примечания</div>
<div class="a" style="left:306px;top:510px;width:917px;height:177px;border:1px solid #a0a0a0;background:#f0f0f0;box-shadow:inset 1px 1px 0 #fff, inset -1px -1px 0 #fff"></div>
<div class="a" style="left:308px;top:490px;width:96px;height:20px;border:1px solid #a0a0a0;border-bottom:none;border-radius:4px 4px 0 0;background:#f0f0f0"></div>
<div class="t" style="left:320px;top:494px">Документы</div>
<div class="a" style="left:311px;top:515px;width:907px;height:29px;background:linear-gradient(#fff,#f6f6f6 50%,#e6e6e6);border-top:1px solid #b8b8b8"></div>
<div class="t" style="left:326px;top:523px">Фильтр</div>
<div class="a" style="left:390px;top:518px;width:400px;height:22px;border:1px solid #a3a3a3;border-top-color:#8e8e8e;background:#fff"></div>
<svg style="left:771px;top:522px" width="17" height="14" viewBox="0 0 17 14"><path d="M16 0.500L11.500 5" stroke="#3d62b8" stroke-width="1.300"/><path d="M10 3.500l3 2.500-1.500 3z" fill="#c9a33a"/><path d="M0 6.500L10.500 3.500 13 6 8.500 13.500C5 12 2 9.500 0 6.500z" fill="#e8c95a"/><path d="M3 7.500l5 4M5.500 6.500l4.500 4M8 5.500l3 3" stroke="#c9a33a" stroke-width=".7"/><path d="M6 12l2.500 1.500 1-1.500z" fill="#3a3a3a"/></svg>
<svg style="left:796px;top:522px" width="11" height="14" viewBox="0 0 11 14"><path d="M3 0h5v7h3L5.500 14 0 7h3z" fill="#b9b9b9"/></svg>
<svg style="left:821px;top:522px" width="11" height="14" viewBox="0 0 11 14"><path d="M3 14h5V7h3L5.500 0 0 7h3z" fill="#b9b9b9"/></svg>
<div class="hl" style="left:311px;top:544px;width:907px;background:#8c8c8c"></div>
<div class="vl" style="left:311px;top:545px;height:136px;background:#a0a0a0"></div>
<div class="hd" style="left:312px;top:545px;width:12px;height:50px;"></div>
<svg style="left:314px;top:568px" width="7" height="4" viewBox="0 0 7 4"><path d="M0 0h7L3.500 4z" fill="#000"/></svg>
<div class="hd" style="left:324px;top:545px;width:81px;height:50px;">Рег. №</div>
<div class="hd" style="left:405px;top:545px;width:315px;height:26px;justify-content:flex-start;padding-left:74px">Документ подрядчика</div>
<div class="hd" style="left:405px;top:571px;width:71px;height:24px;">тип</div>
<div class="hd" style="left:476px;top:571px;width:61px;height:24px;">№</div>
<div class="hd" style="left:537px;top:571px;width:81px;height:24px;">дата</div>
<div class="hd" style="left:618px;top:571px;width:102px;height:24px;">контрагент</div>
<div class="hd" style="left:720px;top:545px;width:242px;height:26px;">Сумма всего</div>
<div class="hd" style="left:720px;top:571px;width:80px;height:24px;">договор</div>
<div class="hd" style="left:800px;top:571px;width:81px;height:24px;">акт</div>
<div class="hd" style="left:881px;top:571px;width:81px;height:24px;">остаток</div>
<div class="hd" style="left:962px;top:545px;width:31px;height:50px;"><span style="display:inline-block;transform:translateY(-3px) rotate(-90deg);white-space:nowrap;font-size:11.7px">Статус</span></div>
<div class="hd" style="left:993px;top:545px;width:160px;height:50px;">Дата изменения</div>
<div class="hd" style="left:1153px;top:545px;width:47px;height:26px;border-right:none"></div>
<div class="hd" style="left:1153px;top:571px;width:47px;height:24px;border-right:none;justify-content:flex-start;padding-left:14px;overflow:hidden;white-space:nowrap">договор</div>
<div class="a" style="left:324px;top:595px;width:876px;height:69px;background:#fff"></div>
<div class="a" style="left:312px;top:595px;width:12px;height:35px;background:#f0f0f0;border-right:1px solid #a0a0a0;border-bottom:1px solid #a0a0a0"></div>
<div class="a" style="left:312px;top:630px;width:12px;height:34px;background:#f0f0f0;border-right:1px solid #a0a0a0"></div>
<svg style="left:314px;top:605px" width="7" height="13" viewBox="0 0 7 13"><path d="M0 0l7 6.500-7 6.500z" fill="#000"/></svg>
<svg style="left:328px;top:608px" width="9" height="9" viewBox="0 0 9 9"><rect x=".5" y=".5" width="8" height="8" fill="#fff" stroke="#8c8c8c"/><path d="M2 4.500h5" stroke="#000"/></svg>
<div class="c ce n" style="left:341px;top:595px;width:64px;height:35px;background:#848484;color:#fff;">698</div>
<div class="c " style="left:405px;top:595px;width:71px;height:35px;background:#848484;color:#fff;">ДП</div>
<div class="c " style="left:476px;top:595px;width:61px;height:35px;background:#848484;color:#fff;">3</div>
<div class="c  n" style="left:537px;top:595px;width:81px;height:35px;background:#848484;color:#fff;">26.07.2019</div>
<div class="c " style="left:618px;top:595px;width:102px;height:35px;background:#848484;color:#fff;"></div>
<div class="c r n" style="left:720px;top:595px;width:80px;height:35px;background:#848484;color:#fff;">46 971 486</div>
<div class="c r n" style="left:800px;top:595px;width:81px;height:35px;background:#848484;color:#fff;">186 217</div>
<div class="c r n" style="left:881px;top:595px;width:81px;height:35px;background:#848484;color:#fff;">46 785 269</div>
<div class="c ce n" style="left:962px;top:595px;width:31px;height:35px;background:#5cf35c;color:#000;">105</div>
<div class="c ce n" style="left:993px;top:595px;width:160px;height:35px;background:#848484;color:#fff;">26.07.2019&nbsp;&nbsp;&nbsp;11-26</div>
<div class="c " style="left:1153px;top:595px;width:47px;height:35px;background:#848484;color:#fff;border-right:none;"></div>
<div class="c ce n" style="left:359px;top:630px;width:46px;height:34px;background:#fff;color:#000;border-bottom:none;">697</div>
<div class="c " style="left:405px;top:630px;width:71px;height:34px;background:#fff;color:#000;border-bottom:none;">Акт</div>
<div class="c " style="left:476px;top:630px;width:61px;height:34px;background:#fff;color:#000;border-bottom:none;">1</div>
<div class="c  n" style="left:537px;top:630px;width:81px;height:34px;background:#fff;color:#000;border-bottom:none;">27.06.2019</div>
<div class="c " style="left:618px;top:630px;width:102px;height:34px;background:#fff;color:#000;border-bottom:none;">ТОВ "Будівельник-2</div>
<div class="c " style="left:720px;top:630px;width:80px;height:34px;background:#fff;color:#000;border-bottom:none;"></div>
<div class="c r n" style="left:800px;top:630px;width:81px;height:34px;background:#fff;color:#000;border-bottom:none;">186 217</div>
<div class="c " style="left:881px;top:630px;width:81px;height:34px;background:#fff;color:#000;border-bottom:none;"></div>
<div class="c ce n" style="left:962px;top:630px;width:31px;height:34px;background:#5cf35c;color:#000;border-bottom:none;">105</div>
<div class="c ce n" style="left:993px;top:630px;width:160px;height:34px;background:#fff;color:#000;border-bottom:none;">03.10.2019&nbsp;&nbsp;&nbsp;16-25</div>
<div class="c " style="left:1153px;top:630px;width:47px;height:34px;background:#fff;color:#000;border-right:none;border-bottom:none;"></div>
<div class="vl" style="left:359px;top:630px;height:34px;background:#b4b4b4"></div>
<div class="a" style="left:1200px;top:545px;width:18px;height:119px;background:#f0f0f0"></div>
<div class="a" style="left:1202px;top:562px;width:14px;height:17px;background:#cdcdcd"></div>
<svg style="left:1204px;top:551px" width="8" height="6" viewBox="0 0 8 6"><path d="M0.700 5.400L4 1.900 7.300 5.400" fill="none" stroke="#505050" stroke-width="2.100"/></svg>
<svg style="left:1204px;top:653px" width="8" height="6" viewBox="0 0 8 6"><path d="M0.700 0.600L4 4.100 7.300 0.600" fill="none" stroke="#505050" stroke-width="2.100"/></svg>
<div class="a" style="left:312px;top:664px;width:906px;height:17px;background:#f0f0f0"></div>
<div class="a" style="left:329px;top:665px;width:672px;height:15px;background:#cdcdcd"></div>
<svg style="left:317px;top:669px" width="6" height="8" viewBox="0 0 6 8"><path d="M5.300 0.700L1.500 4 5.300 7.300" fill="none" stroke="#555" stroke-width="2"/></svg>
<svg style="left:1189px;top:669px" width="6" height="8" viewBox="0 0 6 8"><path d="M0.700 0.700L4.500 4 0.700 7.300" fill="none" stroke="#555" stroke-width="2"/></svg>
<div class="hl" style="left:303px;top:691px;width:923px;background:#a8a8a8"></div>
<div class="hl" style="left:0px;top:694px;width:1231px;background:#6d6d6d"></div>
<div class="vl" style="left:1227px;top:119px;height:573px;background:#a8a8a8"></div>
<div class="vl" style="left:1228px;top:119px;height:573px;background:#fff"></div><!-- MENUS -->
<div class="a" style="left:488px;top:269px;width:276px;height:361px;background:#fcfcfc;border:1px solid #c4c0bc;border-right-color:#8a8a8a;border-bottom-color:#8a8a8a;box-shadow:2px 2px 3px rgba(0,0,0,.55),inset 0 0 0 2px #fff"></div>
<div class="a" style="left:491px;top:272px;width:26px;height:355px;background:#f0f0f0"></div>
<div class="a" style="left:491px;top:272px;width:267px;height:25px;background:#a6cff2;border:1px solid #0b44a0"></div>
<div class="mi" style="left:522px;top:277px;color:#000">Создать</div>
<div class="mi" style="left:522px;top:303px;color:#000">Объединить сметные документы</div>
<div class="mi" style="left:522px;top:339px;color:#000">Открыть договоры</div>
<div class="mi" style="left:522px;top:375px;color:#000">Редактировать</div>
<div class="mi" style="right:476px;top:375px;color:#000">F2</div>
<div class="mi" style="left:522px;top:400px;color:#000">Редактировать статус</div>
<div class="mi" style="right:476px;top:400px;color:#000">Ctrl+F2</div>
<div class="mi" style="left:522px;top:425px;color:#000">Открыть сметную документацию</div>
<div class="mi" style="left:522px;top:461px;color:#000">Удалить</div>
<div class="mi" style="left:522px;top:486px;color:#8a8a8a">Восстановить</div>
<div class="mi" style="left:522px;top:522px;color:#000">Вырезать</div>
<div class="mi" style="right:476px;top:522px;color:#000">Ctrl+X</div>
<div class="mi" style="left:522px;top:547px;color:#000">Копировать</div>
<div class="mi" style="right:476px;top:547px;color:#000">Ctrl+C</div>
<div class="mi" style="left:522px;top:572px;color:#8a8a8a">Вставить</div>
<div class="mi" style="right:476px;top:572px;color:#8a8a8a">Ctrl+V</div>
<div class="mi" style="left:522px;top:608px;color:#000">Добавить к сравнению</div>
<div class="sep" style="left:522px;top:327px;width:238px;background:#a8a8a8"></div>
<div class="sep" style="left:522px;top:364px;width:238px;background:#a8a8a8"></div>
<div class="sep" style="left:522px;top:449px;width:238px;background:#a8a8a8"></div>
<div class="sep" style="left:522px;top:510px;width:238px;background:#a8a8a8"></div>
<div class="sep" style="left:522px;top:597px;width:238px;background:#a8a8a8"></div>
<svg style="left:749px;top:281px" width="4" height="7" viewBox="0 0 4 7"><path d="M0 0l4 3.500-4 3.500z" fill="#eaf4ff"/></svg>
<svg style="left:494px;top:337px" width="17" height="16" viewBox="0 0 24 24"><path d="M7.900 4.500V.9h8.500V4.500" fill="none" stroke="#a8854f" stroke-width="2"/><rect x=".4" y="4.400" width="23.200" height="19.200" rx="1.600" fill="#d1a552" stroke="#b38c4e" stroke-width=".8"/><path d="M.8 6.500Q5 14 12 15.500Q19 14 23.200 6.500" fill="none" stroke="#b9935a" stroke-width="1.200"/><circle cx="12" cy="14.300" r="3" fill="#b08e66"/></svg>
<svg style="left:495px;top:373px" width="16" height="16" viewBox="0 0 24 24"><rect x=".5" y=".5" width="18.500" height="23" fill="#fff" stroke="#b6b2ae" stroke-width="1.400"/><path d="M4 5.600h11M4 8.600h11M4 11.600h11M4 14.600h9" stroke="#8f8f8f" stroke-width="1.300"/><path d="M3 20.500l1-1.200 1 1.200 1-1.200 1 1.200 1-1.200 1 .6" fill="none" stroke="#1a6fd8" stroke-width="1"/><path d="M22.800 5.800l.2 4.500-6.700 6.900-2.500-2.400z" fill="#0f6bd2"/><path d="M13.800 14.800l2.500 2.400L10.200 20.200z" fill="#e8541e"/></svg>
<svg style="left:496px;top:422px" width="14" height="17" viewBox="0 0 20 24"><rect x=".3" y="1" width="19" height="23" rx="2.200" fill="#0f6bd2"/><path d="M2.200 3h14.800v13.300l-5.200 5.200H2.200z" fill="#fff"/><path d="M17 16.300h-5.200v5.200z" fill="#bdbdbd"/><path d="M5 4.600V2.200Q5 1.300 6 1.300H7.200L8 0h3.800l.8 1.300H14Q15 1.300 15 2.200V4.600z" fill="#e8622c"/><path d="M5 7.900h9M5 10.900h9M5 13.900h9" stroke="#959595" stroke-width="1.300"/></svg>
<svg style="left:495px;top:459px" width="16" height="16" viewBox="0 0 24 24"><defs><linearGradient id="tg2" x1="0" x2="1"><stop offset="0" stop-color="#6f6f6f"/><stop offset=".35" stop-color="#d9d9d9"/><stop offset=".7" stop-color="#9a9a9a"/><stop offset="1" stop-color="#5f5f5f"/></linearGradient></defs><path d="M1.500 3.500h14l-1.500 19.500h-11z" fill="url(#tg2)"/><ellipse cx="8.500" cy="3.300" rx="7.500" ry="2.300" fill="#8a8a8a" stroke="#5d5d5d" stroke-width=".8"/><path d="M5 6l.8 15M8.500 6.500v15M12 6l-.8 15" stroke="#5f5f5f" stroke-width=".9"/><ellipse cx="18" cy="17" rx="3.800" ry="6.600" transform="rotate(-18 18 17)" fill="#cfcfcf" stroke="#8a8a8a" stroke-width="1"/></svg>
<svg style="left:496px;top:484px" width="15" height="16" viewBox="0 0 15 16"><path d="M.5 .5h8l3 3v12H.5z" fill="#f4f4f4" stroke="#c4c4c4"/><path d="M3 5h5M3 7.500h6M3 10h4" stroke="#cfcfcf"/><circle cx="10.500" cy="11.500" r="3" fill="#f4f4f4" stroke="#c4c4c4"/></svg>
<svg style="left:497px;top:520px" width="13" height="16" viewBox="0 0 13 16"><path d="M3.600 .5l4.200 10.500M9.400 .5L5.200 11" stroke="#1b4fa8" stroke-width="1.900" fill="none"/><circle cx="2.900" cy="13" r="2.100" fill="#fff" stroke="#1a6fd8" stroke-width="1.600"/><circle cx="10.100" cy="13" r="2.100" fill="#fff" stroke="#1a6fd8" stroke-width="1.600"/></svg>
<svg style="left:495px;top:545px" width="16" height="16" viewBox="0 0 16 16"><path d="M5.500 .5h6.500l3 3v9.500h-9.500z" fill="#fcfcfc" stroke="#9a9a9a"/><path d="M12 .5v3h3" fill="none" stroke="#9a9a9a" stroke-width=".8"/><path d="M.5 3.500h6.500l3 3v9H.5z" fill="#fcfcfc" stroke="#8e8e8e"/><path d="M7 3.500v3h3" fill="none" stroke="#8e8e8e" stroke-width=".8"/><path d="M2.500 9.500h5.500M2.500 11.500h5.500M2.500 13.500h5.500M11.500 6.500h2M11.500 8.500h2" stroke="#a8a8a8" stroke-width=".9"/></svg>
<svg style="left:496px;top:570px" width="14" height="16" viewBox="0 0 14 16"><rect x=".5" y="1.500" width="10" height="13" rx="1" fill="#d4d4d4" stroke="#c4c4c4"/><rect x="3" y="0" width="5" height="3" rx="1" fill="#c4c4c4"/><path d="M4.500 5.500h6l3 3v7h-9z" fill="#f4f4f4" stroke="#c8c8c8"/><path d="M6.500 10h4M6.500 12h5" stroke="#cfcfcf"/></svg>
<svg style="left:494px;top:605px" width="17" height="17" viewBox="0 0 17 17"><path d="M8.500 1v14" stroke="#1a1a1a" stroke-width="2.400"/><path d="M.5 2.800h16" stroke="#1a1a1a" stroke-width="2"/><path d="M2.500 15.800h12" stroke="#1a1a1a" stroke-width="2.200"/><path d="M3.300 3.500L1 9.500M3.300 3.500l2.300 6M13.700 3.500l-2.300 6M13.700 3.500l2.300 6" fill="none" stroke="#1a1a1a" stroke-width="1"/><path d="M0 9.300h6.600q-.4 3-3.300 3T0 9.300zM10.400 9.300H17q-.4 3-3.300 3t-3.300-3z" fill="#1a1a1a"/><circle cx="8.500" cy="1.800" r="1.700" fill="#1a1a1a"/></svg>
<div class="a" style="left:758px;top:269px;width:260px;height:131px;background:#fcfcfc;border:1px solid #c4c0bc;border-right-color:#8a8a8a;border-bottom-color:#8a8a8a;box-shadow:2px 2px 3px rgba(0,0,0,.55),inset 0 0 0 2px #fff"></div>
<div class="a" style="left:761px;top:272px;width:25px;height:125px;background:#f0f0f0"></div>
<div class="a" style="left:760px;top:372px;width:254px;height:25px;background:#a6cff2;border:1px solid #0b44a0"></div>
<div class="mi" style="left:791px;top:278px">Стройку</div>
<div class="mi" style="left:791px;top:303px">Раздел сметной документации</div>
<div class="mi" style="left:791px;top:328px">Сметную документацию</div>
<div class="mi" style="left:791px;top:353px">"Нулевую смету"</div>
<div class="mi" style="left:791px;top:378px">Договор</div>
<svg style="left:764px;top:276px" width="17" height="17"><use href="#crane"/></svg>
<svg style="left:764px;top:302px" width="17" height="15" viewBox="0 0 17 15"><path d="M.5 3Q.5 1.500 2 1.500h4.500l1.500 2h7q1 0 1 1v8q0 1-1 1H1.500q-1 0-1-1z" fill="#f8e08e" stroke="#c9a24a" stroke-width="1"/><path d="M.5 3Q.5 1.500 2 1.500h4.500l1.500 2z" fill="#e0b35a"/></svg>
<svg style="left:766px;top:326px" width="14" height="17"><use href="#docC"/></svg>
<svg style="left:766px;top:376px" width="14" height="17"><use href="#docD"/></svg></body></html>
